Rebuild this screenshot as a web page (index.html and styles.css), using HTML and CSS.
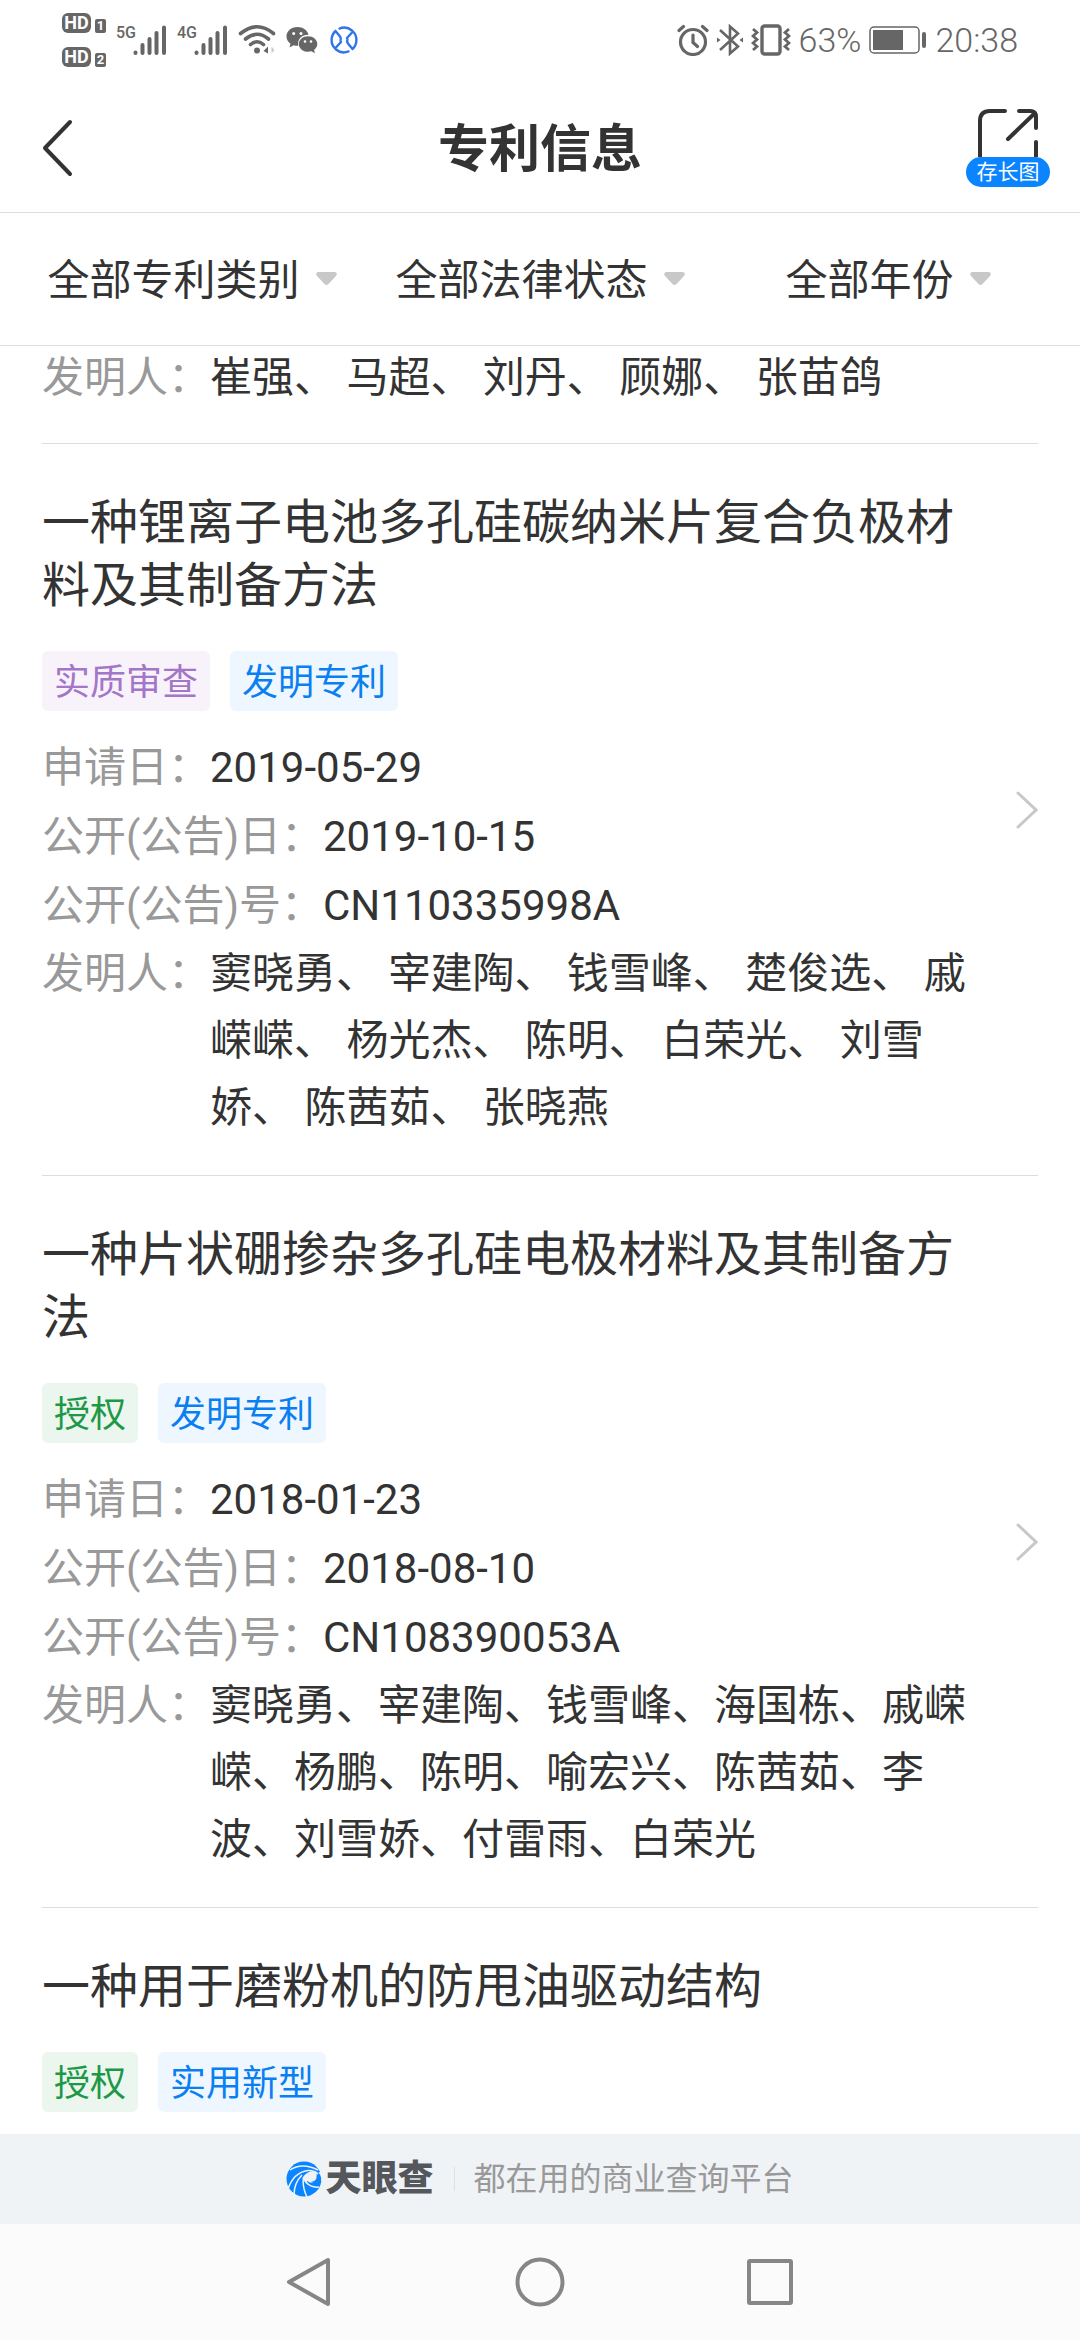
FILE: index.html
```html
<!DOCTYPE html>
<html lang="zh-CN">
<head>
<meta charset="UTF-8" />
<meta name="viewport" content="width=device-width, initial-scale=1" />
<title>专利信息</title>
<link rel="stylesheet" href="styles.css">
</head>
<body>

<!-- Status bar -->
<div class="status-bar">
  <div class="status-left">
    <div class="sims">
      <div class="sim"><span class="hd">HD</span><span class="slot">1</span></div>
      <div class="sim"><span class="hd">HD</span><span class="slot">2</span></div>
    </div>
    <div class="signal">
      <span class="network">5G</span>
      <svg width="34" height="30" viewBox="0 0 34 30" stroke="#666" stroke-width="4" stroke-linecap="round"><path d="M2.5 27.5v.5M9.5 20v8M16.5 14v14M23.500 8v20M31 2.500V28"/></svg>
    </div>
    <div class="signal">
      <span class="network">4G</span>
      <svg width="34" height="30" viewBox="0 0 34 30" stroke="#666" stroke-width="4" stroke-linecap="round"><path d="M2.5 27.5v.5M9.5 20v8M16.5 14v14M23.500 8v20M31 2.500V28"/></svg>
    </div>
    <svg width="38" height="32" viewBox="0 0 38 32" fill="none" stroke="#666" stroke-width="3.600" stroke-linecap="round">
      <path d="M2.500 9.500Q19-4 35.500 9.500M7.500 15Q19 5.500 30.500 15M12.500 20.500Q19 15 25.500 20.500"/>
      <circle cx="19" cy="26.500" r="3" fill="#666" stroke="none"/>
      <path d="M30 22.500v7l-4.500-2.500z" fill="#666" stroke="none"/>
      <path d="M33.500 22.500v7l3-3.500z" fill="#ccc" stroke="none"/>
    </svg>
    <svg width="32" height="28" viewBox="0 0 32 28">
      <path fill="#666" d="M11.500 1C5.200 1 .5 5.200.5 10.500c0 3 1.500 5.500 4 7.200l-1 3.800 4.200-2.200c1.500.4 3 .6 4.600.5C11 13 16 8.500 22.500 8.700 21.500 4.300 17 1 11.500 1z"/>
      <path fill="#666" d="M22 10.300c-5.200 0-9.200 3.400-9.200 7.700s4 7.800 9.200 7.800c1.200 0 2.300-.2 3.400-.5l3.600 1.900-1-3.200c2-1.400 3.300-3.600 3.300-6 0-4.300-4.100-7.700-9.300-7.700z"/>
      <g fill="#fff"><circle cx="7.700" cy="7.500" r="1.500"/><circle cx="15" cy="7.500" r="1.500"/><circle cx="19" cy="15.500" r="1.300"/><circle cx="25" cy="15.500" r="1.300"/></g>
    </svg>
    <svg class="app-mark" width="28" height="28" viewBox="0 0 28 28" fill="none" stroke="#2f74ec" stroke-width="2.400" stroke-linecap="round" stroke-linejoin="round">
      <path d="M9.500 2.600A12.300 12.300 0 0 1 22 4.500M18.500 25.400A12.300 12.300 0 0 1 6 23.500"/>
      <path d="M5.500 5C.5 9.500.3 18 5 22.500l6-6.500M5.500 5l4.500 5.500q1.500 2 .5 4"/>
      <path d="M22.500 23c5-4.500 5.200-13 .5-17.500l-6 6.500M22.500 23l-4.500-5.500q-1.500-2-.5-4"/>
    </svg>
  </div>
  <div class="status-right">
    <svg width="32" height="32" viewBox="0 0 32 32" fill="none" stroke="#666" stroke-width="3.200" stroke-linecap="round">
      <circle cx="16" cy="18" r="12.500"/><path d="M16 11v7.500l4.500 4M2 6.500L6.500 2.500M30 6.500L25.500 2.500"/>
    </svg>
    <svg width="26" height="32" viewBox="0 0 26 32" fill="none" stroke="#666" stroke-width="2.600">
      <path d="M3 6l18 16.500-8 7V2.500l8 7L3 26"/><path d="M0 13.500v5l3.500-2.500zM26 13.500v5L22.500 16z" fill="#666" stroke="none"/>
    </svg>
    <svg width="40" height="32" viewBox="0 0 40 32" fill="none" stroke="#666" stroke-width="3.400">
      <rect x="11" y="2" width="18" height="28" rx="2.500"/>
      <path d="M2 5l4 3.500-4 3.500 4 3.500L2 19l4 3.500L2 26M38 5l-4 3.500 4 3.500-4 3.500 4 3.500-4 3.500 4 3.500" stroke-width="2.800"/>
    </svg>
    <span class="status-text">63%</span>
    <svg class="battery" width="58" height="28" viewBox="0 0 58 28">
      <rect x="1" y="1" width="49" height="26" rx="4" fill="none" stroke="#666" stroke-width="1.500"/>
      <rect x="4" y="4" width="30" height="20" fill="#666"/>
      <rect x="53" y="6" width="4" height="16" rx="2" fill="#666"/>
    </svg>
    <span class="status-text">20:38</span>
  </div>
</div>

<!-- Title bar -->
<header class="header">
  <button class="back-btn" aria-label="返回">
    <svg width="32" height="58" viewBox="0 0 32 58" fill="none" stroke="#333" stroke-width="4" stroke-linecap="round" stroke-linejoin="round"><path d="M28 3L3 29l25 26"/></svg>
  </button>
  <h1>专利信息</h1>
  <button class="share-btn">
    <svg width="60" height="48" viewBox="0 0 60 48" fill="none" stroke="#333" stroke-width="4" stroke-linecap="round" stroke-linejoin="round">
      <path d="M2 50V12Q2 2 12 2h15M41 2h11q6 0 6 6v11M58 33v17M30 30L57 4"/>
    </svg>
    <span class="share-label">存长图</span>
  </button>
</header>

<!-- Filters -->
<nav class="filters">
  <div class="filter">
    <select aria-label="全部专利类别"><option>全部专利类别</option></select>
    <svg width="21" height="14" viewBox="0 0 21 14"><path fill="#c8c8c8" d="M2 0h17q3 1 1 4l-7.500 8q-2 2-4 0L1 4q-2-3 1-4z"/></svg>
  </div>
  <div class="filter">
    <select aria-label="全部法律状态"><option>全部法律状态</option></select>
    <svg width="21" height="14" viewBox="0 0 21 14"><path fill="#c8c8c8" d="M2 0h17q3 1 1 4l-7.500 8q-2 2-4 0L1 4q-2-3 1-4z"/></svg>
  </div>
  <div class="filter">
    <select aria-label="全部年份"><option>全部年份</option></select>
    <svg width="21" height="14" viewBox="0 0 21 14"><path fill="#c8c8c8" d="M2 0h17q3 1 1 4l-7.500 8q-2 2-4 0L1 4q-2-3 1-4z"/></svg>
  </div>
</nav>

<!-- Patent list -->
<main class="list">
  <a class="patent patent-tail" href="#">
    <div class="patent-body">
      <dl>
        <div class="field people"><dt>发明人：</dt><dd>崔强、 马超、 刘丹、 顾娜、 张苗鸽</dd></div>
      </dl>
    </div>
  </a>

  <a class="patent" href="#">
    <div class="patent-body">
      <h2>一种锂离子电池多孔硅碳纳米片复合负极材料及其制备方法</h2>
      <div class="tags"><span class="tag purple">实质审查</span><span class="tag blue">发明专利</span></div>
      <dl>
        <div class="field"><dt>申请日：</dt><dd>2019-05-29</dd></div>
        <div class="field"><dt>公开(公告)日：</dt><dd>2019-10-15</dd></div>
        <div class="field"><dt>公开(公告)号：</dt><dd>CN110335998A</dd></div>
        <div class="field people"><dt>发明人：</dt><dd>窦晓勇、 宰建陶、 钱雪峰、 楚俊选、 戚嵘嵘、 杨光杰、 陈明、 白荣光、 刘雪娇、 陈茜茹、 张晓燕</dd></div>
      </dl>
    </div>
    <svg class="arrow" width="22" height="38" viewBox="0 0 22 38" fill="none" stroke="#c8c8c8" stroke-width="3" stroke-linecap="round"><path d="M2 2l18 17L2 36"/></svg>
  </a>

  <a class="patent" href="#">
    <div class="patent-body">
      <h2>一种片状硼掺杂多孔硅电极材料及其制备方法</h2>
      <div class="tags"><span class="tag green">授权</span><span class="tag blue">发明专利</span></div>
      <dl>
        <div class="field"><dt>申请日：</dt><dd>2018-01-23</dd></div>
        <div class="field"><dt>公开(公告)日：</dt><dd>2018-08-10</dd></div>
        <div class="field"><dt>公开(公告)号：</dt><dd>CN108390053A</dd></div>
        <div class="field people"><dt>发明人：</dt><dd>窦晓勇、宰建陶、钱雪峰、海国栋、戚嵘嵘、杨鹏、陈明、喻宏兴、陈茜茹、李波、刘雪娇、付雷雨、白荣光</dd></div>
      </dl>
    </div>
    <svg class="arrow" width="22" height="38" viewBox="0 0 22 38" fill="none" stroke="#c8c8c8" stroke-width="3" stroke-linecap="round"><path d="M2 2l18 17L2 36"/></svg>
  </a>

  <a class="patent" href="#">
    <div class="patent-body">
      <h2>一种用于磨粉机的防甩油驱动结构</h2>
      <div class="tags"><span class="tag green">授权</span><span class="tag blue">实用新型</span></div>
    </div>
  </a>
</main>

<!-- Brand strip -->
<footer class="brand">
  <svg width="36" height="36" viewBox="0 0 36 36">
    <circle cx="18" cy="18" r="17.500" fill="#0a84ff"/>
    <path fill="#f0f3f6" d="M17 16C21 10 28 9 32 12L36 10V20L33 20Q27 24 21 20Q20 22 22 24Q18 22 17 16z"/>
    <path fill="#0a84ff" d="M30 10Q36 13 35 20Q31 24 25 21Q33 20 30 10z"/>
    <path fill="none" stroke="#f0f3f6" stroke-width="1.500" d="M2 28C5 19 11 11 22 9.500Q28 9 32 13M4 9Q16 1 32 9M16 14Q8 22 8 34M17.500 16Q16 26 21 36M20 21Q25 27 33 26"/>
  </svg>
  <strong>天眼查</strong>
  <span class="slogan">都在用的商业查询平台</span>
</footer>

<!-- System navigation -->
<div class="nav-keys">
  <button aria-label="后退"><svg width="50" height="50" viewBox="0 0 50 50"><path d="M4 25L43 3v44z"/></svg></button>
  <button aria-label="主页"><svg width="50" height="50" viewBox="0 0 50 50"><circle cx="25" cy="25" r="22.500"/></svg></button>
  <button aria-label="最近任务"><svg width="50" height="50" viewBox="0 0 50 50"><rect x="4" y="4" width="42" height="42" rx="1"/></svg></button>
</div>

</body>
</html>
```
FILE: styles.css
```css
/* Reset & base */
* {
  box-sizing: border-box;
}
body {
  font-family: Roboto, "Noto Sans CJK SC", sans-serif;
  background: #fff;
  color: #333;
  margin: 0;
  height: 100vh;
  display: flex;
  flex-direction: column;
}
h1, h2, dl, dd {
  margin: 0;
}
button, select {
  font-family: inherit;
  color: inherit;
  background: none;
  border: none;
  padding: 0;
}
svg {
  display: block;
  flex: none;
}

/* Status bar */
.status-bar {
  flex: none;
  height: 84px;
  padding: 0 62px;
  display: flex;
  justify-content: space-between;
  color: #666;
}
.status-left, .status-right {
  display: flex;
  align-items: center;
  height: 80px;
}
.status-left {
  gap: 10px;
}
.status-right {
  gap: 8px;
}
.sims {
  display: flex;
  flex-direction: column;
  gap: 14px;
}
.sim {
  display: flex;
  align-items: flex-end;
  gap: 4px;
}
.hd, .slot {
  background: #666;
  color: #fff;
  font-weight: 700;
  text-align: center;
}
.hd {
  width: 29px;
  border-radius: 6px;
  font-size: 18px;
  line-height: 20px;
}
.slot {
  width: 11px;
  border-radius: 2px;
  font-size: 13px;
  line-height: 14px;
}
.signal {
  display: flex;
  align-items: flex-start;
}
.network {
  width: 17px;
  font-size: 16px;
  font-weight: 500;
  line-height: 16px;
}
.app-mark {
  margin-left: 2px;
}
.status-text {
  font-size: 34px;
  font-weight: 300;
}

/* Title bar */
.header {
  flex: none;
  height: 129px;
  padding: 0 30px;
  border-bottom: 1px solid #ddd;
  display: flex;
  align-items: center;
  justify-content: space-between;
}
.header h1 {
  padding-top: 4px;
  font-size: 51px;
  font-weight: 700;
  line-height: 72px;
}
.back-btn {
  width: 84px;
  padding-left: 12px;
}
.share-btn {
  width: 84px;
  display: flex;
  flex-direction: column;
  align-items: center;
}
.share-label {
  width: 100%;
  border-radius: 15px;
  background: #0a84ff;
  color: #fff;
  font-size: 21px;
  line-height: 30px;
}

/* Filters */
.filters {
  flex: none;
  height: 133px;
  padding: 0 18px;
  border-bottom: 1px solid #ddd;
  display: flex;
}
.filter {
  flex: 1;
  display: flex;
  align-items: center;
  justify-content: center;
  gap: 15px;
}
.filter select {
  appearance: none;
  padding-top: 4px;
  font-size: 42px;
  line-height: 60px;
}

/* Patent list */
.list {
  flex: 1;
  min-height: 0;
  overflow: hidden;
}
.patent {
  margin: 0 42px;
  padding: 34px 0;
  border-bottom: 1px solid #ddd;
  display: flex;
  align-items: center;
  color: inherit;
  text-decoration: none;
}
.patent-body {
  flex: 1;
  padding-right: 36px;
}
.patent h2 {
  padding-top: 13px;
  font-size: 48px;
  font-weight: 400;
  line-height: 63px;
}
.tags {
  display: flex;
  gap: 20px;
  margin: 34px 0 22px;
}
.tag {
  padding: 4px 12px 0;
  border-radius: 6px;
  font-size: 36px;
  line-height: 56px;
}
.purple {
  background: #f8f2fb;
  color: #a476c8;
}
.blue {
  background: #eef7ff;
  color: #0a7ff2;
}
.green {
  background: #ebf6ef;
  color: #1c9846;
}
.field {
  display: flex;
  font-size: 42px;
  line-height: 69px;
}
.field dt {
  flex: none;
  color: #999;
}
.people {
  line-height: 67px;
}
.patent-tail {
  padding-top: 0;
}
.patent-tail .field {
  line-height: 63px;
}

/* Brand strip */
.brand {
  flex: none;
  height: 90px;
  background: #f0f3f6;
  display: flex;
  align-items: center;
  justify-content: center;
}
.brand strong {
  margin: 0 20px 0 3px;
  font-size: 36px;
  font-weight: 900;
  line-height: 48px;
  color: #54575c;
}
.slogan {
  position: relative;
  padding-left: 20px;
  font-size: 32px;
  line-height: 48px;
  color: #999;
}
.slogan::before {
  content: "";
  position: absolute;
  left: 0;
  top: 12px;
  height: 24px;
  border-left: 1px solid #dcdfe3;
}

/* System navigation */
.nav-keys {
  flex: none;
  height: 116px;
  background: #fbfbfb;
  display: flex;
  align-items: center;
  justify-content: center;
}
.nav-keys button {
  width: 230px;
  display: flex;
  justify-content: center;
}
.nav-keys svg {
  fill: none;
  stroke: #868686;
  stroke-width: 4;
  stroke-linejoin: round;
}
```
